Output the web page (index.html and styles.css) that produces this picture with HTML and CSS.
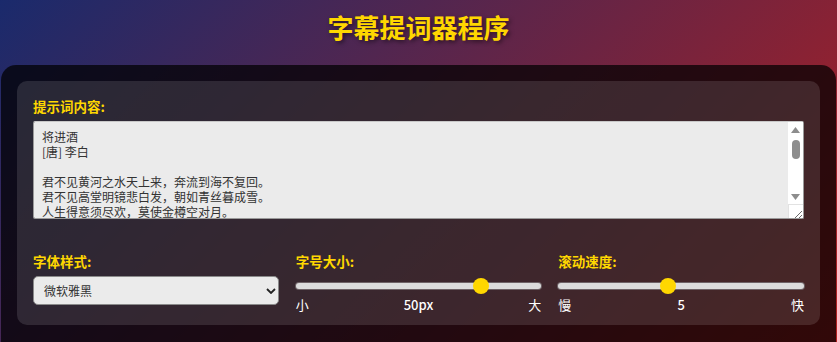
FILE: index.html
```html
<!DOCTYPE html>
<html lang="zh-CN">
<head>
<meta charset="utf-8">
<title>字幕提词器程序</title>
<link rel="stylesheet" href="styles.css">
</head>
<body>
<h1 class="title">字幕提词器程序</h1>
<div class="container">
  <div class="panel">
    <label class="field-label" for="content">提示词内容:</label>
    <div class="textarea-wrap">
      <textarea id="content" class="content-input">将进酒
[唐] 李白

君不见黄河之水天上来，奔流到海不复回。
君不见高堂明镜悲白发，朝如青丝暮成雪。
人生得意须尽欢，莫使金樽空对月。
天生我材必有用，千金散尽还复来。
烹羊宰牛且为乐，会须一饮三百杯。
岑夫子，丹丘生，将进酒，杯莫停。
与君歌一曲，请君为我倾耳听。
钟鼓馔玉不足贵，但愿长醉不愿醒。
古来圣贤皆寂寞，惟有饮者留其名。
陈王昔时宴平乐，斗酒十千恣欢谑。
主人何为言少钱，径须沽取对君酌。
五花马，千金裘，呼儿将出换美酒，与尔同销万古愁。</textarea>
      <div class="fake-scroll" aria-hidden="true">
        <svg class="arrow" width="9" height="6" viewBox="0 0 9 6"><polygon points="4.5,0 9,6 0,6" fill="#8d8d8d"/></svg>
        <span class="thumb"></span>
        <span class="spacer"></span>
        <svg class="arrow arrow-down" width="9" height="6" viewBox="0 0 9 6"><polygon points="0,0 9,0 4.5,6" fill="#8d8d8d"/></svg>
        <span class="grip">
          <svg width="14" height="13" viewBox="0 0 14 13"><path d="M13 6 L6 13 M13 10 L10 13" stroke="#6a6a6a" stroke-width="1"/></svg>
        </span>
      </div>
    </div>
    <div class="controls">
      <div class="control">
        <label class="field-label" for="font">字体样式:</label>
        <div class="select-wrap">
          <select id="font" class="select">
            <option>微软雅黑</option>
            <option>宋体</option>
            <option>黑体</option>
          </select>
          <svg class="chevron" width="10" height="6" viewBox="0 0 10 6"><path d="M1 1 L5 5 L9 1" fill="none" stroke="#222" stroke-width="1.8"/></svg>
        </div>
      </div>
      <div class="control">
        <label class="field-label" for="size">字号大小:</label>
        <input id="size" class="range" type="range" min="16" max="60" value="50">
        <div class="range-labels"><span>小</span><span class="range-value">50px</span><span>大</span></div>
      </div>
      <div class="control">
        <label class="field-label" for="speed">滚动速度:</label>
        <input id="speed" class="range" type="range" min="1" max="10" value="5">
        <div class="range-labels"><span>慢</span><span class="range-value">5</span><span>快</span></div>
      </div>
    </div>
  </div>
  <div class="display"></div>
</div>
</body>
</html>
```
FILE: styles.css
```css
html {
  height: 100%;
  background: linear-gradient(135deg, #1a2a6c, #b21f1f);
}
html, body {
  margin: 0;
  padding: 0;
}
body {
  font-family: "Noto Sans CJK SC", "Noto Sans", sans-serif;
  color: #fff;
}
.title {
  margin: 0;
  padding-top: 12px;
  margin-bottom: 23px;
  text-align: center;
  font-size: 26px;
  line-height: 30px;
  font-weight: bold;
  color: #ffd700;
  text-shadow: 2px 2px 4px rgba(0, 0, 0, 0.5);
}
.container {
  margin: 0 1px;
  background: rgba(0, 0, 0, 0.72);
  border-radius: 15px;
  padding: 16px;
}
.panel {
  background: rgba(255, 255, 255, 0.12);
  border-radius: 10px;
  padding: 16px 16px 11px;
}
.field-label {
  display: block;
  font-size: 13.5px;
  line-height: 19px;
  font-weight: bold;
  color: #ffd700;
  margin-bottom: 5px;
}
.textarea-wrap {
  position: relative;
}
.content-input {
  display: block;
  box-sizing: border-box;
  width: 100%;
  height: 98px;
  margin: 0;
  padding: 7px 24px 8px 8px;
  font-family: "Noto Sans CJK SC", sans-serif;
  font-size: 12px;
  line-height: 15px;
  color: #333;
  background: #ebebeb;
  border: 1px solid #9a9a9a;
  border-top-color: #c8c8c8;
  border-radius: 2px;
  resize: none;
}
.fake-scroll {
  position: absolute;
  top: 1px;
  right: 1px;
  bottom: 1px;
  width: 15px;
  background: #fff;
  display: flex;
  flex-direction: column;
  align-items: center;
}
.arrow {
  display: block;
  margin-top: 5px;
  flex: none;
}
.thumb {
  display: block;
  width: 8px;
  height: 19px;
  margin-top: 7px;
  border-radius: 4px;
  background: #8d8d8d;
  flex: none;
}
.spacer {
  flex: 1;
}
.arrow-down {
  margin-top: 0;
  margin-bottom: 4px;
}
.grip {
  display: block;
  box-sizing: border-box;
  width: 15px;
  height: 14px;
  border-top: 1px solid #e2e2e2;
  border-left: 1px solid #e2e2e2;
  flex: none;
}
.grip svg {
  display: block;
}
.controls {
  display: grid;
  grid-template-columns: repeat(3, 1fr);
  gap: 17px;
  margin-top: 33px;
}
.select-wrap {
  position: relative;
}
.select {
  display: block;
  box-sizing: border-box;
  width: 100%;
  height: 29px;
  margin: 0;
  padding: 0 10px;
  appearance: none;
  -webkit-appearance: none;
  font-family: "Noto Sans CJK SC", sans-serif;
  font-size: 12px;
  color: #333;
  background: #ebebeb;
  border: 1px solid #8a8a8a;
  border-radius: 5px;
}
.chevron {
  position: absolute;
  right: 3px;
  top: 12px;
}
.range {
  display: block;
  width: 100%;
  height: 20px;
  margin: 0;
  -webkit-appearance: none;
  appearance: none;
  background: transparent;
}
.range::-webkit-slider-runnable-track {
  height: 6px;
  background: #dcdcdc;
  border-radius: 3px;
  box-shadow: 0 0 0 1px #6e6266;
}
.range::-webkit-slider-thumb {
  -webkit-appearance: none;
  width: 16px;
  height: 16px;
  margin-top: -5px;
  border-radius: 50%;
  background: #ffd700;
  border: none;
}
.range-labels {
  display: flex;
  justify-content: space-between;
  font-size: 13px;
  line-height: 18px;
  color: #fff;
}
.range-value {
  font-weight: 500;
}
.display {
  margin-top: 20px;
  height: 420px;
  background: rgba(0, 0, 0, 0.5);
  border-radius: 10px;
}
```
